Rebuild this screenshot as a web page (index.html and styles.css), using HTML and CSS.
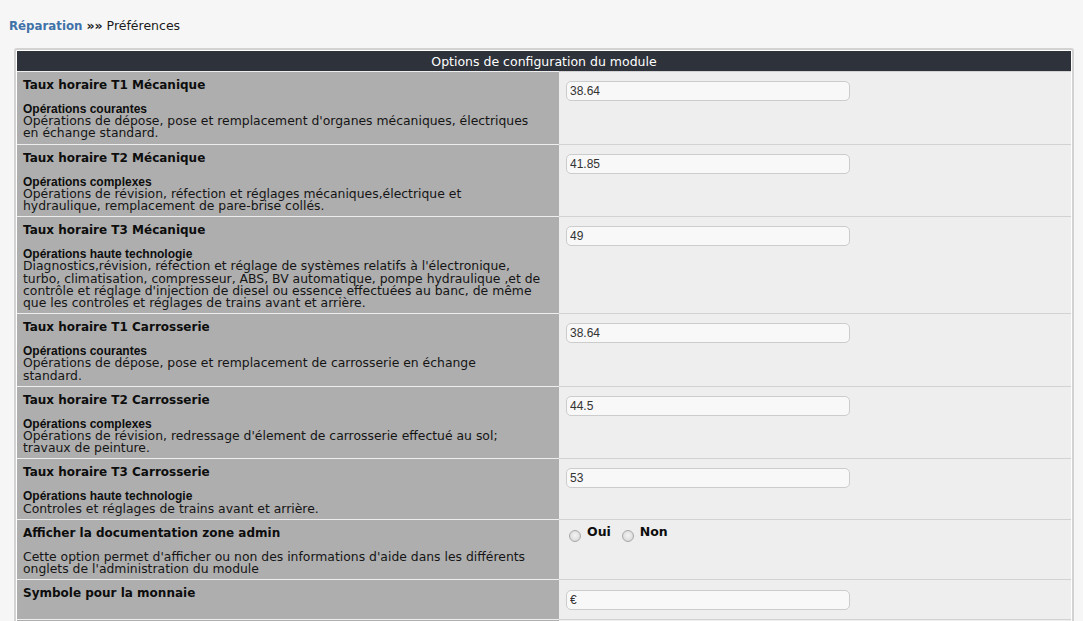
FILE: index.html
```html
<!DOCTYPE html>
<html lang="fr">
<head>
<meta charset="utf-8">
<title>Réparation - Préférences</title>
<link rel="stylesheet" href="styles.css">
</head>
<body>
<div class="crumb"><a class="crumb-link" href="#">Réparation</a> <span class="crumb-sep">»»</span> Préférences</div>
<div class="panel">
  <div class="panel-head">Options de configuration du module</div>

  <div class="row">
    <div class="label">
      <div class="title">Taux horaire T1 Mécanique</div>
      <div class="sub">Opérations courantes</div>
      <div class="desc">Opérations de dépose, pose et remplacement d'organes mécaniques, électriques<br>en échange standard.</div>
    </div>
    <div class="field"><input class="text" type="text" value="38.64"></div>
  </div>

  <div class="row">
    <div class="label">
      <div class="title">Taux horaire T2 Mécanique</div>
      <div class="sub">Opérations complexes</div>
      <div class="desc">Opérations de révision, réfection et réglages mécaniques,électrique et<br>hydraulique, remplacement de pare-brise collés.</div>
    </div>
    <div class="field"><input class="text" type="text" value="41.85"></div>
  </div>

  <div class="row">
    <div class="label">
      <div class="title">Taux horaire T3 Mécanique</div>
      <div class="sub">Opérations haute technologie</div>
      <div class="desc">Diagnostics,révision, réfection et réglage de systèmes relatifs à l'électronique,<br>turbo, climatisation, compresseur, ABS, BV automatique, pompe hydraulique ,et de<br>contrôle et réglage d'injection de diesel ou essence effectuées au banc, de même<br>que les controles et réglages de trains avant et arrière.</div>
    </div>
    <div class="field"><input class="text" type="text" value="49"></div>
  </div>

  <div class="row">
    <div class="label">
      <div class="title">Taux horaire T1 Carrosserie</div>
      <div class="sub">Opérations courantes</div>
      <div class="desc">Opérations de dépose, pose et remplacement de carrosserie en échange<br>standard.</div>
    </div>
    <div class="field"><input class="text" type="text" value="38.64"></div>
  </div>

  <div class="row">
    <div class="label">
      <div class="title">Taux horaire T2 Carrosserie</div>
      <div class="sub">Opérations complexes</div>
      <div class="desc">Opérations de révision, redressage d'élement de carrosserie effectué au sol;<br>travaux de peinture.</div>
    </div>
    <div class="field"><input class="text" type="text" value="44.5"></div>
  </div>

  <div class="row">
    <div class="label">
      <div class="title">Taux horaire T3 Carrosserie</div>
      <div class="sub">Opérations haute technologie</div>
      <div class="desc">Controles et réglages de trains avant et arrière.</div>
    </div>
    <div class="field"><input class="text" type="text" value="53"></div>
  </div>

  <div class="row">
    <div class="label">
      <div class="title">Afficher la documentation zone admin</div>
      <div class="desc">Cette option permet d'afficher ou non des informations d'aide dans les différents<br>onglets de l'administration du module</div>
    </div>
    <div class="field field-radio">
      <label class="opt"><input class="radio" type="radio" name="doc"><span>Oui</span></label>
      <label class="opt"><input class="radio" type="radio" name="doc"><span>Non</span></label>
    </div>
  </div>

  <div class="row">
    <div class="label">
      <div class="title">Symbole pour la monnaie</div>
    </div>
    <div class="field field-last"><input class="text" type="text" value="€"></div>
  </div>

  <div class="row">
    <div class="label">
      <div class="title">&nbsp;</div>
    </div>
    <div class="field"></div>
  </div>
</div>
</body>
</html>
```

FILE: styles.css
```css
html, body {
  margin: 0;
  padding: 0;
  background: #f6f6f6;
}

body {
  font-family: "DejaVu Sans", Verdana, sans-serif;
  font-size: 12px;
  color: #111;
}

.crumb {
  padding: 18px 9px 0 9px;
  height: 14px;
  line-height: 16px;
  font-size: 12.5px;
  color: #1a1a1a;
}

.crumb-link {
  color: #3f72a8;
  font-weight: bold;
  font-size: 11.8px;
  text-decoration: none;
}

.crumb-sep {
  font-weight: bold;
  color: #222;
}

.panel {
  margin: 16px 0 0 14px;
  width: 1054px;
  border: 2px solid #d2d2d2;
  border-radius: 3px;
  padding: 1px;
  background: #ffffff;
}

.panel-head {
  height: 20px;
  line-height: 21px;
  background: #2e323a;
  color: #ffffff;
  text-align: center;
  font-size: 12.5px;
}

.row {
  display: grid;
  grid-template-columns: 542px 1fr;
}

.label {
  background: #aeaeae;
  border-top: 1px solid #eeeeee;
  padding: 6px 6px 4px 6px;
}

.field {
  background: #eeeeee;
  border-top: 1px solid #d2d2d2;
  padding: 9px 0 0 7px;
}

.field-last {
  padding-top: 10px;
  padding-bottom: 9px;
}

.title {
  font-weight: bold;
  line-height: 14px;
  color: #0d0d0d;
  margin-bottom: 11px;
}

.sub {
  font-family: "Liberation Sans", Arial, sans-serif;
  font-weight: bold;
  font-size: 12px;
  line-height: 12.2px;
  color: #0d0d0d;
}

.desc {
  font-size: 12.4px;
  line-height: 12.2px;
  color: #151515;
  white-space: nowrap;
}

.text {
  box-sizing: border-box;
  width: 284px;
  height: 20px;
  margin: 0;
  padding: 0 3px;
  border: 1px solid #cccccc;
  border-radius: 5px;
  background: #f8f8f8;
  font-family: "Liberation Sans", Arial, sans-serif;
  font-size: 12px;
  color: #333333;
  outline: none;
}

.field-radio {
  display: flex;
  align-items: flex-start;
  gap: 11px;
  padding: 5px 0 0 10px;
}

.opt {
  display: flex;
  align-items: flex-start;
  gap: 6px;
  font-weight: bold;
  font-size: 12.5px;
  line-height: 14px;
  color: #0d0d0d;
}

.radio {
  appearance: none;
  -webkit-appearance: none;
  width: 12px;
  height: 12px;
  margin: 5px 0 0 0;
  border-radius: 50%;
  border: 1px solid #a8a8a8;
  background: radial-gradient(circle at 50% 45%, #f4f4f4 0%, #dcdcdc 70%, #cfcfcf 100%);
  box-sizing: border-box;
}
```
